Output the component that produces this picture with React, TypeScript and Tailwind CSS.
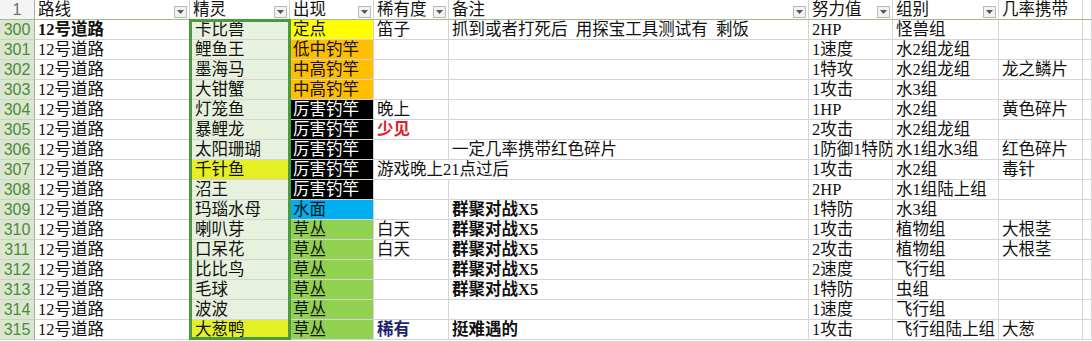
import React from "react";

type Row = {
  n: number;
  route: string;
  routeBold?: boolean;
  mon: string;
  monHi?: boolean;
  spot: string;
  rare: string;
  rareStyle?: "red" | "navy";
  rareSpill?: boolean;
  note: string;
  noteBold?: boolean;
  ev: string;
  group: string;
  item: string;
};

const ROWS: Row[] = [
  { n: 300, route: "12号道路", routeBold: true, mon: "卡比兽", spot: "定点", rare: "笛子", note: "抓到或者打死后  用探宝工具测试有  剩饭", ev: "2HP", group: "怪兽组", item: "" },
  { n: 301, route: "12号道路", mon: "鲤鱼王", spot: "低中钓竿", rare: "", note: "", ev: "1速度", group: "水2组龙组", item: "" },
  { n: 302, route: "12号道路", mon: "墨海马", spot: "中高钓竿", rare: "", note: "", ev: "1特攻", group: "水2组龙组", item: "龙之鳞片" },
  { n: 303, route: "12号道路", mon: "大钳蟹", spot: "中高钓竿", rare: "", note: "", ev: "1攻击", group: "水3组", item: "" },
  { n: 304, route: "12号道路", mon: "灯笼鱼", spot: "厉害钓竿", rare: "晚上", note: "", ev: "1HP", group: "水2组", item: "黄色碎片" },
  { n: 305, route: "12号道路", mon: "暴鲤龙", spot: "厉害钓竿", rare: "少见", rareStyle: "red", note: "", ev: "2攻击", group: "水2组龙组", item: "" },
  { n: 306, route: "12号道路", mon: "太阳珊瑚", spot: "厉害钓竿", rare: "", note: "一定几率携带红色碎片", ev: "1防御1特防", group: "水1组水3组", item: "红色碎片" },
  { n: 307, route: "12号道路", mon: "千针鱼", monHi: true, spot: "厉害钓竿", rare: "游戏晚上21点过后", rareSpill: true, note: "", ev: "1攻击", group: "水2组", item: "毒针" },
  { n: 308, route: "12号道路", mon: "沼王", spot: "厉害钓竿", rare: "", note: "", ev: "2HP", group: "水1组陆上组", item: "" },
  { n: 309, route: "12号道路", mon: "玛瑙水母", spot: "水面", rare: "", note: "群聚对战X5", noteBold: true, ev: "1特防", group: "水3组", item: "" },
  { n: 310, route: "12号道路", mon: "喇叭芽", spot: "草丛", rare: "白天", note: "群聚对战X5", noteBold: true, ev: "1攻击", group: "植物组", item: "大根茎" },
  { n: 311, route: "12号道路", mon: "口呆花", spot: "草丛", rare: "白天", note: "群聚对战X5", noteBold: true, ev: "2攻击", group: "植物组", item: "大根茎" },
  { n: 312, route: "12号道路", mon: "比比鸟", spot: "草丛", rare: "", note: "群聚对战X5", noteBold: true, ev: "2速度", group: "飞行组", item: "" },
  { n: 313, route: "12号道路", mon: "毛球", spot: "草丛", rare: "", note: "群聚对战X5", noteBold: true, ev: "1特防", group: "虫组", item: "" },
  { n: 314, route: "12号道路", mon: "波波", spot: "草丛", rare: "", note: "", ev: "1速度", group: "飞行组", item: "" },
  { n: 315, route: "12号道路", mon: "大葱鸭", monHi: true, spot: "草丛", rare: "稀有", rareStyle: "navy", note: "挺难遇的", noteBold: true, ev: "1攻击", group: "飞行组陆上组", item: "大葱" },
];

const SPOT_BG: Record<string, string> = {
  定点: "bg-[#ffff00] text-[#111]",
  低中钓竿: "bg-[#ffbf00] text-[#111]",
  中高钓竿: "bg-[#ffbf00] text-[#111]",
  厉害钓竿: "bg-black text-white",
  水面: "bg-[#00aff0] text-[#111]",
  草丛: "bg-[#92d050] text-[#111]",
};

const cell =
  "h-[20px] border-b border-r border-[#d4d4d4] pl-[3px] leading-[19px] whitespace-nowrap overflow-hidden text-[16.5px] text-[#111]";

function Filter() {
  return (
    <span className="absolute right-[2px] top-[6px] flex h-[12px] w-[13px] items-center justify-center border border-[#b9b9b9] bg-[#f2f2f2]">
      <svg width="7" height="4" viewBox="0 0 7 4">
        <path d="M0 0h7L3.5 4z" fill="#555" />
      </svg>
    </span>
  );
}

function Head({ label, filter = true }: { label: string; filter?: boolean }) {
  return (
    <div className={`${cell} relative bg-white border-b-[#9fbb92]`}>
      {label}
      {filter && <Filter />}
    </div>
  );
}

export default function App() {
  return (
    <div
      className="relative h-[341px] w-[1092px] overflow-hidden bg-white"
      style={{ fontFamily: '"Liberation Serif", "Noto Sans CJK SC", serif' }}
    >
      <div className="grid grid-cols-[35px_155px_100px_84px_75px_360px_84px_106px_84px_1fr]">
        <div className="h-[20px] border-b border-r border-b-[#9fbb92] border-r-[#9fb393] bg-[#f4f4f4] text-center font-['Liberation_Sans'] text-[16px] leading-[19px] text-[#707070]">
          1
        </div>
        <Head label="路线" />
        <Head label="精灵" />
        <Head label="出现" />
        <Head label="稀有度" />
        <Head label="备注" />
        <Head label="努力值" />
        <Head label="组别" />
        <Head label="几率携带" filter={false} />
        <div className={`${cell} border-b-[#9fbb92]`} />

        {ROWS.map((r) => (
          <React.Fragment key={r.n}>
            <div className="h-[20px] border-b border-r border-b-[#c9d6bf] border-r-[#9fb393] bg-[#dbe6d1] text-center font-['Liberation_Sans'] text-[16px] leading-[19px] text-[#4f8a3b]">
              {r.n}
            </div>
            <div className={`${cell} ${r.routeBold ? "font-bold" : ""}`}>{r.route}</div>
            <div className={`${cell} pl-[5px] ${r.monHi ? "bg-[#e5ef24]" : "bg-[#e7f2de]"}`}>{r.mon}</div>
            <div className={`${cell} ${SPOT_BG[r.spot]}`}>{r.spot}</div>
            <div
              className={`${cell} ${r.rareSpill ? "overflow-visible border-r-transparent" : ""} ${
                r.rareStyle === "red" ? "font-bold text-[#e0202a]" : r.rareStyle === "navy" ? "font-bold text-[#22226e]" : ""
              }`}
            >
              {r.rare}
            </div>
            <div className={`${cell} whitespace-pre ${r.noteBold ? "font-bold" : ""}`}>{r.note}</div>
            <div className={cell}>{r.ev}</div>
            <div className={cell}>{r.group}</div>
            <div className={cell}>{r.item}</div>
            <div className={cell} />
          </React.Fragment>
        ))}
      </div>
      {/* selected column outline */}
      <div className="pointer-events-none absolute left-[189px] top-[19px] h-[321px] w-[102px] border-[3px] border-[#4a9a3e]" />
    </div>
  );
}
